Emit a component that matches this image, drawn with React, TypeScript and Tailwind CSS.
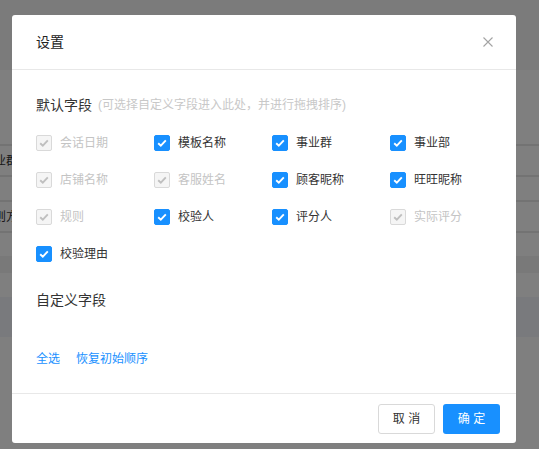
import React from "react";

type Field = { label: string; checked: boolean; disabled?: boolean };

const fields: Field[] = [
  { label: "会话日期", checked: true, disabled: true },
  { label: "模板名称", checked: true },
  { label: "事业群", checked: true },
  { label: "事业部", checked: true },
  { label: "店铺名称", checked: true, disabled: true },
  { label: "客服姓名", checked: true, disabled: true },
  { label: "顾客昵称", checked: true },
  { label: "旺旺昵称", checked: true },
  { label: "规则", checked: true, disabled: true },
  { label: "校验人", checked: true },
  { label: "评分人", checked: true },
  { label: "实际评分", checked: true, disabled: true },
  { label: "校验理由", checked: true },
];

function CheckBox({ field }: { field: Field }) {
  const box = field.disabled
    ? "bg-[#f5f5f5] border border-[#d9d9d9]"
    : "bg-[#1890ff] border border-[#1890ff]";
  return (
    <label className="flex items-center gap-2 h-[37px] cursor-pointer">
      <span className={`w-4 h-4 rounded-[2px] flex items-center justify-center shrink-0 ${box}`}>
        <svg width="12" height="12" viewBox="0 0 12 12">
          <polyline
            points="2.2,6.2 4.8,8.6 9.8,3.4"
            fill="none"
            stroke={field.disabled ? "#bfbfbf" : "#fff"}
            strokeWidth="1.9"
          />
        </svg>
      </span>
      <span className={`text-[12px] leading-5 ${field.disabled ? "text-[#c4c4c4]" : "text-[#333]"}`}>
        {field.label}
      </span>
    </label>
  );
}

// page behind the mask, only a sliver shows at the sides
function Background() {
  return (
    <div className="flex flex-col w-full h-full bg-white">
      <div className="h-[70px] bg-[#f6f6f6]" />
      <div className="h-[74px]" />
      <div className="h-[31px] border-t-2 border-[#e6e6e6] flex items-center text-[12px] text-[#333]">
        <span className="ml-[-18px]">事业群</span>
      </div>
      <div className="h-[25px] border-t-2 border-[#e6e6e6]" />
      <div className="h-[31px] border-t-2 border-[#e6e6e6] flex items-center text-[12px] text-[#333]">
        <span className="ml-[-18px]">规则方案</span>
      </div>
      <div className="h-[25px] border-t-2 border-[#e6e6e6]" />
      <div className="h-[17px] bg-[#f2f2f2]" />
      <div className="h-[24px]" />
      <div className="h-[40px] bg-[#f3f4fa]" />
    </div>
  );
}

export default function App() {
  return (
    <div className="relative w-full h-[449px] overflow-hidden font-['Liberation_Sans','Noto_Sans_CJK_SC',sans-serif]">
      <Background />
      <div className="absolute inset-0 bg-black/50" />
      <div className="absolute left-[12px] top-[15px] w-[504px] h-[428px] bg-white rounded-[3px] flex flex-col">
        <div className="h-[55px] px-6 flex items-center justify-between border-b border-[#e8e8e8]">
          <span className="text-[14px] text-[#222]">设置</span>
          <svg width="10" height="10" viewBox="0 0 10 10" className="mr-[-1px]">
            <path d="M0.5 0.5 L9.5 9.5 M9.5 0.5 L0.5 9.5" stroke="#a3a3a3" strokeWidth="1.1" />
          </svg>
        </div>
        <div className="px-6 pt-[24px] pb-[24px] flex flex-col border-b border-[#e8e8e8]">
          <div className="h-[22px] flex items-center">
            <span className="text-[14px] text-[#333]">默认字段</span>
            <span className="ml-[6px] text-[12px] text-[#c8c8c8]">(可选择自定义字段进入此处，并进行拖拽排序)</span>
          </div>
          <div className="mt-[8px] grid grid-cols-[repeat(4,118px)]">
            {fields.map((f) => (
              <CheckBox key={f.label} field={f} />
            ))}
          </div>
          <div className="mt-[17px] h-[22px] flex items-center text-[14px] text-[#333]">自定义字段</div>
          <div className="h-[38px]" />
          <div className="h-5 flex items-center gap-[16px] text-[12px] text-[#1890ff]">
            <span>全选</span>
            <span>恢复初始顺序</span>
          </div>
        </div>
        <div className="flex-1 flex items-center justify-end gap-2 px-4">
          <button className="w-[57px] h-[30px] rounded-[3px] border border-[#d9d9d9] bg-white text-[12px] text-[#333]">
            取 消
          </button>
          <button className="w-[57px] h-[30px] rounded-[3px] bg-[#1890ff] text-[12px] text-white">
            确 定
          </button>
        </div>
      </div>
    </div>
  );
}
